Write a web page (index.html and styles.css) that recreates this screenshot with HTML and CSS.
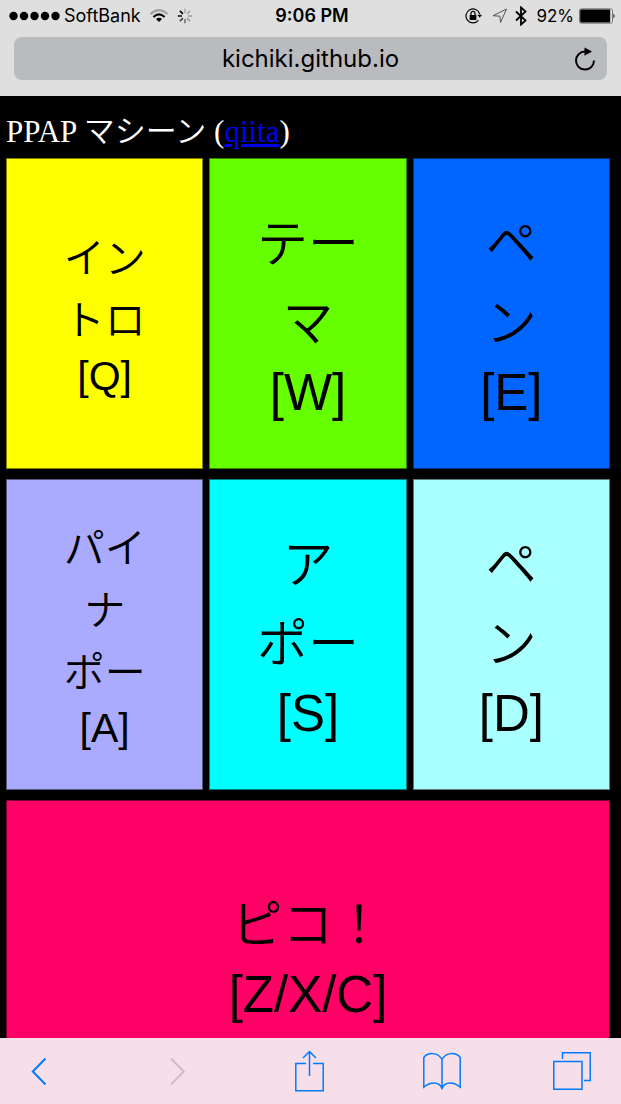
FILE: index.html
```html
<!DOCTYPE html>
<html lang="ja">
<head>
<meta charset="utf-8">
<meta name="viewport" content="width=device-width, initial-scale=1">
<title>PPAP マシーン</title>
<link rel="stylesheet" href="styles.css">
</head>
<body>
<header class="browser-top">
  <div class="status">
    <div class="status-left">
      <svg width="51" height="10" viewBox="0 0 51 10" aria-hidden="true"><circle cx="4.5" cy="5" r="4.2"/><circle cx="15" cy="5" r="4.2"/><circle cx="25.5" cy="5" r="4.2"/><circle cx="36" cy="5" r="4.2"/><circle cx="46.5" cy="5" r="4.2"/></svg>
      <span class="carrier">SoftBank</span>
      <svg class="wifi" width="20" height="16" viewBox="0 0 20 16" fill="none" stroke="#000" stroke-width="2" aria-hidden="true"><path d="M1.5 6Q10-1.8 18.5 6" stroke="#a2a2a2"/><path d="M4.4 9Q10 3.8 15.6 9"/><path d="M10 14L7 11Q10 8.6 13 11Z" fill="#000" stroke="none"/></svg>
      <svg width="16" height="16" viewBox="0 0 16 16" fill="none" stroke-width="1.7" aria-hidden="true"><path d="M8 .8V5" stroke="#aaa"/><path d="M13.1 2.9L10.1 5.9" stroke="#a5a5a5"/><path d="M15.2 8H11" stroke="#a0a0a0"/><path d="M13.1 13.1L10.1 10.1" stroke="#999"/><path d="M8 15.2V11" stroke="#777"/><path d="M2.9 13.1L5.9 10.1" stroke="#444"/><path d="M.8 8H5" stroke="#222"/><path d="M2.9 2.9L5.9 5.9" stroke="#000"/></svg>
    </div>
    <time class="clock">9:06 PM</time>
    <div class="status-right">
      <svg width="18" height="16" viewBox="0 0 18 16" aria-hidden="true"><path d="M14.7 6A7 7 0 1 0 13.4 12.4" fill="none" stroke="#000" stroke-width="1.2"/><path d="M12.4 6.8H17L14.7 9.8Z"/><rect x="4.6" y="7" width="6.8" height="5" rx=".6"/><path d="M6 7V5.4A2 2 0 0 1 10 5.4V7" fill="none" stroke="#000" stroke-width="1.2"/></svg>
      <svg class="location" width="16" height="16" viewBox="0 0 16 16" fill="none" stroke="#555" stroke-width="1" stroke-linejoin="round" aria-hidden="true"><path d="M1 7.7L14.5 1L8.5 14.5L7.9 8.2Z"/></svg>
      <svg class="bluetooth" width="12" height="20" viewBox="0 0 12 20" fill="none" stroke="#000" stroke-width="1.8" aria-hidden="true"><path d="M1 5.5L10.5 14.5L6 18.6V1.4L10.5 5.5L1 14.5"/></svg>
      <span class="charge">92%</span>
      <svg width="36" height="16" viewBox="0 0 36 16" aria-hidden="true"><rect x=".5" y=".8" width="33" height="14.4" rx="1.8" fill="none" stroke="#777"/><rect x="1.2" y="1.6" width="30" height="12.8" rx="1"/><path d="M34.5 5.5Q36.5 8 34.5 10.5Z"/></svg>
    </div>
  </div>
  <div class="address">
    <input class="url" type="text" value="kichiki.github.io" aria-label="アドレス" readonly>
    <button class="reload" type="button" aria-label="再読み込み">
      <svg width="22" height="24" viewBox="0 0 22 24" aria-hidden="true"><path d="M12.5 4.6H11A9 9 0 1 0 20 13.6" fill="none" stroke="#000" stroke-width="2"/><path d="M10.5 .5L18 4.6L10.5 8.8Z"/></svg>
    </button>
  </div>
</header>

<main class="page">
  <h1 class="title">PPAP マシーン (<a href="#">qiita</a>)</h1>
  <div class="pads">
    <button class="pad pad-q small" type="button"><span>イン</span><span>トロ</span><kbd>[Q]</kbd></button>
    <button class="pad pad-w" type="button"><span>テー</span><span>マ</span><kbd>[W]</kbd></button>
    <button class="pad pad-e" type="button"><span>ペ</span><span>ン</span><kbd>[E]</kbd></button>
    <button class="pad pad-a small" type="button"><span>パイ</span><span>ナ</span><span>ポー</span><kbd>[A]</kbd></button>
    <button class="pad pad-s" type="button"><span>ア</span><span>ポー</span><kbd>[S]</kbd></button>
    <button class="pad pad-d" type="button"><span>ペ</span><span>ン</span><kbd>[D]</kbd></button>
    <button class="pad pad-z" type="button"><span>ピコ！</span><kbd>[Z/X/C]</kbd></button>
  </div>
</main>

<nav class="toolbar" aria-label="ブラウザ">
  <button type="button" aria-label="戻る"><svg width="16" height="28" viewBox="0 0 16 28"><path d="M14.5 1.5L1.8 14.5L14.5 27.5" stroke-width="2"/></svg></button>
  <button type="button" aria-label="進む" disabled><svg width="16" height="28" viewBox="0 0 16 28"><path d="M1 1.5L13.7 14.5L1 27.5" stroke-width="2"/></svg></button>
  <button type="button" aria-label="共有"><svg width="29" height="42" viewBox="0 0 29 42"><path d="M11 13.5H.8V40.8H28.2V13.5H18M14.5 26V2M8 8L14.5 1.5L21 8"/></svg></button>
  <button type="button" aria-label="ブックマーク"><svg width="38" height="38" viewBox="0 0 38 38"><path d="M19 7.5C15 0 5 0 .8 5.5V35.2C7 30 16 29 19 36.5C22 29 31 30 37.2 35.2V5.5C33 0 23 0 19 7.5V36.5"/></svg></button>
  <button type="button" aria-label="タブ"><svg width="38" height="38" viewBox="0 0 38 38"><path d="M.8 9.5H29V37.2H.8ZM9.5 7V.8H37.2V28.5H31"/></svg></button>
</nav>
</body>
</html>
```

FILE: styles.css
```css
* {
  box-sizing: border-box;
}

body {
  margin: 0;
  height: 100vh;
  display: flex;
  flex-direction: column;
  overflow: hidden;
  background: #000;
  font-family: Inter, "Noto Sans CJK JP", sans-serif;
}

button {
  margin: 0;
  padding: 0;
  border: 0;
  background: none;
  color: inherit;
  font: inherit;
}

svg {
  display: block;
  flex: none;
}

.browser-top {
  flex: none;
  padding-bottom: 16px;
  background: #dfdfdf;
  color: #000;
}

.status {
  display: grid;
  grid-template-columns: 1fr auto 1fr;
  align-items: center;
  height: 32px;
  padding: 0 6px 0 9px;
  font-size: 18px;
  line-height: 20px;
}

.status-left,
.status-right {
  display: flex;
  align-items: center;
  gap: 4px;
}

.status-right {
  justify-content: flex-end;
  gap: 5px;
}

.wifi {
  margin: 0 4px;
}

.location {
  margin-left: 4px;
}

.bluetooth {
  margin: 0 4px 0 2px;
}

.charge {
  font-size: 17px;
}

.clock {
  font-weight: 600;
}

.address {
  display: grid;
  grid-template-columns: 1fr 44px;
  align-items: center;
  height: 43px;
  margin: 5px 14px 0;
  padding-left: 44px;
  border-radius: 8px;
  background: #babbbf;
}

.url {
  width: 100%;
  padding: 0;
  border: 0;
  outline: 0;
  background: none;
  color: #000;
  font: 24px/32px Inter, sans-serif;
  text-align: center;
}

.reload {
  display: grid;
  place-items: center;
}

.page {
  flex: 1;
  min-height: 0;
  overflow: hidden;
  padding: 18px 11px 0 6px;
}

.title {
  margin: 0 0 8px;
  color: #fff;
  font: 350 31px/36px "Liberation Serif", "Noto Sans CJK JP", serif;
}

.title a {
  color: #00e;
}

.pads {
  display: grid;
  grid-template-columns: repeat(3, 1fr);
  grid-auto-rows: 311px;
  gap: 10px 6px;
}

.pad {
  display: flex;
  flex-direction: column;
  align-items: center;
  justify-content: center;
  border: 1px solid rgba(0, 0, 0, 0.5);
  color: #000;
  font: 350 51px/79px "Liberation Sans", "Noto Sans CJK JP", sans-serif;
}

.pad kbd {
  font-family: inherit;
  line-height: 60px;
}

.small {
  font-size: 41px;
  line-height: 62px;
}

.small kbd {
  line-height: 48px;
}

.pad-q { background: #ff0; }
.pad-w { background: #6f0; }
.pad-e { background: #06f; }
.pad-a { background: #aaf; }
.pad-s { background: #0ff; }
.pad-d { background: #aff; }

.pad-z {
  grid-column: 1 / -1;
  background: #f06;
}

.toolbar {
  flex: none;
  display: grid;
  grid-template-columns: 139fr 125fr 128fr 130fr 38px;
  align-items: center;
  justify-items: start;
  height: 66px;
  padding: 0 30px 0 31px;
  background: #f7dfea;
  color: #007aff;
}

.toolbar button:disabled {
  color: #cdbcc5;
}

.toolbar svg {
  fill: none;
  stroke: currentColor;
  stroke-width: 1.5;
}
```
